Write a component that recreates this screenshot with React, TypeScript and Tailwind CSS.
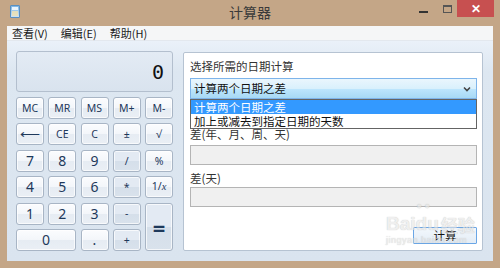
import React from "react";

const cjk = { fontFamily: '"Noto Sans CJK SC", "Noto Sans", sans-serif' };
const ui = { fontFamily: '"Noto Sans", "Open Sans", "Noto Sans CJK SC", sans-serif' };

type B = { t: string; op?: boolean; cls?: string; big?: boolean };

const buttons: B[] = [
  { t: "MC" }, { t: "MR" }, { t: "MS" }, { t: "M+" }, { t: "M-" },
  { t: "⟵", big: true }, { t: "CE" }, { t: "C" }, { t: "±" }, { t: "√" },
  { t: "7", big: true }, { t: "8", big: true }, { t: "9", big: true }, { t: "/", op: true }, { t: "%" },
  { t: "4", big: true }, { t: "5", big: true }, { t: "6", big: true }, { t: "*", op: true }, { t: "1/x" },
  { t: "1", big: true }, { t: "2", big: true }, { t: "3", big: true }, { t: "-", op: true },
  { t: "=", op: true, cls: "row-span-2", big: true },
  { t: "0", big: true, cls: "col-span-2" }, { t: ".", big: true }, { t: "+", op: true },
];

function CalcBtn({ b }: { b: B }) {
  const bg = b.op
    ? "bg-[linear-gradient(#e3eaf3_0%,#e3eaf3_50%,#d5dfea_51%,#d9e2ec_100%)]"
    : "bg-[linear-gradient(#fbfcfe_0%,#f3f6fa_50%,#e6ecf3_51%,#eaeff5_100%)]";
  return (
    <div
      className={`${bg} ${b.cls ?? ""} flex items-center justify-center rounded-[3px] border border-[#a8b5c5] text-[#1e395b] shadow-[inset_0_0_0_1px_rgba(255,255,255,0.7)]`}
      style={ui}
    >
      <span className={b.t === "=" ? "text-[22px] leading-none font-bold" : b.big ? "text-[14px] leading-none" : "text-[10.5px] leading-none"}>
        {b.t === "1/x" ? (
          <span>
            1/<i style={{ fontFamily: '"Liberation Serif", serif' }}>x</i>
          </span>
        ) : (
          b.t
        )}
      </span>
    </div>
  );
}

export default function App() {
  return (
    <div className="w-[500px] h-[268px] bg-[#c4a687] flex flex-col overflow-hidden relative" style={cjk}>
      {/* Title bar */}
      <div className="h-[26px] flex items-start relative shrink-0">
        <div className="ml-[10px] mt-[5px] w-[10px] h-[13px] rounded-[1px] bg-[linear-gradient(#7fb6e6,#cfe3f5)] border border-[#5a8fc0] flex flex-col items-center pt-[1px] gap-[1px]">
          <div className="w-[6px] h-[3px] bg-[#eaf4fd]" />
          <div className="w-[6px] h-[5px] bg-[#f3e2b0] opacity-80" />
        </div>
        <div className="absolute left-0 right-0 top-[3px] text-center text-[14px] leading-[18px] text-[#3a3a3a]">计算器</div>
        <div className="ml-auto flex items-start">
          <div className="w-[9px] h-[2px] bg-[#333] mt-[11px] mr-[15px]" />
          <div className="w-[9px] h-[8px] border border-[#555] border-t-2 mt-[5px] mr-[5px]" />
          <div className="w-[37px] h-[17px] bg-[#c75050] flex items-center justify-center text-white text-[12px] font-bold mr-[6px]" style={ui}>
            ✕
          </div>
        </div>
      </div>

      {/* Window body */}
      <div className="mx-[7px] mb-[7px] flex-1 flex flex-col bg-white">
        {/* Menu */}
        <div className="h-[15px] bg-[#f5f6f7] flex items-center gap-[13px] pl-[5px] text-[11px] text-[#1a1a1a] border-b border-[#e3e8ee] shrink-0">
          <span>查看(V)</span>
          <span>编辑(E)</span>
          <span>帮助(H)</span>
        </div>

        {/* Content */}
        <div className="flex-1 bg-[linear-gradient(#eaf1f9_0px,#dde7f1_30px,#dae4ef_100%)] flex pl-[9px] pr-[10px] pt-[10px] gap-[10px]">
          {/* Calculator */}
          <div className="w-[157px] flex flex-col">
            <div className="h-[41px] rounded-[3px] border border-[#b3bfce] bg-[linear-gradient(#e3ebf4,#d9e3ee)] flex items-end justify-end pr-[8px] pb-[9px]">
              <span className="text-[20px] leading-none text-[#111]" style={{ fontFamily: '"DejaVu Sans Mono", monospace' }}>0</span>
            </div>
            <div className="mt-[5px] grid grid-cols-5 grid-rows-[repeat(6,22px)] gap-x-[4.25px] gap-y-[4.4px]">
              {buttons.map((b, i) => (
                <CalcBtn key={i} b={b} />
              ))}
            </div>
          </div>

          {/* Date panel */}
          <div className="w-[300px] h-[199px] mt-[1px] bg-white border border-[#b6c3d2] rounded-[2px] relative flex flex-col pl-[6px] pr-[5px] pt-[6px] text-[11.5px] text-[#333]">
            <div className="leading-[14px]">选择所需的日期计算</div>
            <div className="mt-[5px] h-[21px] border border-[#7eb4ea] bg-[linear-gradient(#eaf6fd,#d9f0fc_50%,#bee6fd_51%,#a7d9f5)] flex items-center pl-[3px] pr-[5px] text-[#111] relative z-10">
              <span>计算两个日期之差</span>
              <svg className="ml-auto" width="8" height="6" viewBox="0 0 8 6">
                <path d="M1 1.5 L4 4.5 L7 1.5" stroke="#444" strokeWidth="1.6" fill="none" />
              </svg>
              {/* Dropdown list overlay */}
              <div className="absolute left-[-1px] right-[-1px] top-[20px] border border-[#646464] bg-white text-[11.5px] leading-[14px]">
                <div className="bg-[#3399ff] text-white pl-[3px]">计算两个日期之差</div>
                <div className="pl-[3px] text-[#111]">加上或减去到指定日期的天数</div>
              </div>
            </div>
            <div className="mt-[28px] leading-[14px]">差(年、月、周、天)</div>
            <div className="mt-[4px] h-[20px] border border-[#b4b4b4] bg-[#f0f0f0]" />
            <div className="mt-[6px] leading-[14px]">差(天)</div>
            <div className="mt-[2px] h-[20px] border border-[#b4b4b4] bg-[#f0f0f0]" />
            <div className="mt-[20px] self-end w-[64px] h-[17px] border border-[#6aa6e6] bg-[linear-gradient(#f2f7fc,#e4edf6)] flex items-center justify-center text-[11.5px] text-[#111] rounded-[1px]">
              计算
            </div>

            {/* Watermark */}
            <div className="absolute left-[202px] top-[161px] w-max whitespace-nowrap pointer-events-none opacity-[0.6] flex flex-col items-start">
              <div className="flex items-end text-[19px] leading-none font-bold text-[#e6e6e6] [text-shadow:0_0_1px_#9a9a9a]" style={{ fontFamily: '"Liberation Sans", sans-serif' }}>
                <span>Bai</span>
                <span className="relative">
                  <span className="absolute left-[1px] top-[-12px] text-[9px]">● ●</span>
                  du
                </span>
                <span className="ml-[2px] text-[17px]" style={cjk}>经验</span>
              </div>
              <div className="mt-[3px] text-[9px] leading-none text-[#e6e6e6] [text-shadow:0_0_1px_#9a9a9a] tracking-[0.5px]" style={{ fontFamily: '"Liberation Sans", sans-serif' }}>
                jingyan.baidu.com
              </div>
            </div>
          </div>
        </div>
      </div>
    </div>
  );
}
